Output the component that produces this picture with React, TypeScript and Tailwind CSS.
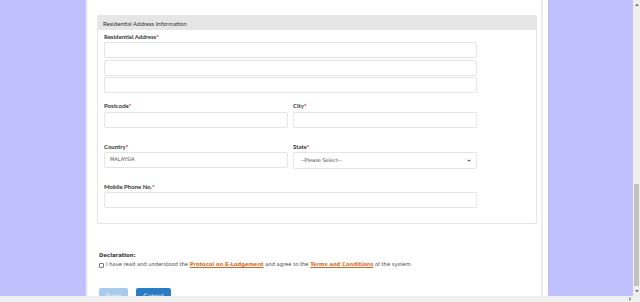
import React from 'react';

const lato = { fontFamily: 'Lato, "Open Sans", sans-serif' };
const tahoma = { fontFamily: '"DejaVu Sans", Verdana, sans-serif' };

function Label({ text }: { text: string }) {
  return (
    <div className="h-[8px] leading-[8px] text-[6px] font-bold text-[#333]" style={lato}>
      {text}
      <span className="text-[#cc0000]">*</span>
    </div>
  );
}

function Input({ value }: { value?: string }) {
  return (
    <div
      className="h-[16px] border border-[#e4e4e4] rounded-[2px] bg-white flex items-center px-[5px] text-[5px] text-[#555]"
      style={tahoma}
    >
      {value}
    </div>
  );
}

function Select() {
  return (
    <div
      className="h-[17px] border border-[#e4e4e4] rounded-[2px] bg-white flex items-center justify-between pl-[7px] pr-[5px] text-[5px] text-[#444]"
      style={tahoma}
    >
      <span>--Please Select--</span>
      <svg width="4" height="3" viewBox="0 0 10 8">
        <path d="M1 2 L5 6 L9 2" stroke="#222" strokeWidth="2.5" fill="none" />
      </svg>
    </div>
  );
}

export default function App() {
  return (
    <div className="w-[640px] h-[302px] overflow-hidden flex flex-col bg-white">
      <div className="flex flex-1 min-h-0">
        <div className="w-[86px] bg-[#c0c0ff]" />
        <div className="w-[462px] flex border-l-2 border-[#efefef] bg-white">
          <div className="w-[453px] pt-[15px]">
            {/* address box */}
            <div className="ml-[9px] w-[440px] border border-[#e6e6e6] rounded-[2px]">
              <div className="h-[14px] bg-[#e6e6e6] flex items-center px-[5px] text-[6px] text-[#333]" style={lato}>
                Residential Address Information
              </div>
              <div className="pl-[6px] pt-[3px] pb-[15px]">
                <div className="w-[373px]">
                  <div className="mb-[1px]">
                    <Label text="Residential Address" />
                  </div>
                  <div className="flex flex-col gap-[1.5px]">
                    <Input />
                    <Input />
                    <Input />
                  </div>

                  <div className="grid grid-cols-2 gap-x-[5px] mt-[9px]">
                    <div>
                      <div className="mb-[2px]"><Label text="Postcode" /></div>
                      <Input />
                    </div>
                    <div>
                      <div className="mb-[2px]"><Label text="City" /></div>
                      <Input />
                    </div>
                  </div>

                  <div className="grid grid-cols-2 gap-x-[5px] mt-[15px]">
                    <div>
                      <div className="mb-[1px]"><Label text="Country" /></div>
                      <Input value="MALAYSIA" />
                    </div>
                    <div>
                      <div className="mb-[1px]"><Label text="State" /></div>
                      <Select />
                    </div>
                  </div>

                  <div className="mt-[14px]">
                    <div className="mb-[1px]"><Label text="Mobile Phone No." /></div>
                    <Input />
                  </div>
                </div>
              </div>
            </div>

            {/* declaration */}
            <div className="ml-[11px] mt-[27px] text-[#444]" style={tahoma}>
              <div className="h-[8px] leading-[8px] text-[5.3px] font-bold text-[#333]">Declaration:</div>
              <div className="mt-[2px] h-[8px] flex items-center text-[5.2px]">
                <span className="w-[5px] h-[5px] border border-[#777] rounded-[1px] mr-[2px] bg-white" />
                <span>
                  I have read and understood the{' '}
                  <span className="font-bold underline text-[#d2691e]">Protocol on E-Lodgement</span> and agree to the{' '}
                  <span className="font-bold underline text-[#d2691e]">Terms and Conditions</span> of the system.
                </span>
              </div>
              <div className="mt-[19px] flex gap-[8px]">
                <button className="w-[29px] h-[14px] rounded-[2px] bg-[#a9cbeb] text-white text-[6px]" style={tahoma}>Save</button>
                <button className="w-[35px] h-[14px] rounded-[2px] bg-[#2b7dc3] text-white text-[6px]" style={tahoma}>Cancel</button>
              </div>
            </div>
          </div>
          <div className="w-[2px] bg-[#ececec]" />
          <div className="flex-1" />
        </div>
        <div className="w-[85px] bg-[#c0c0ff]" />
        <div className="w-[7px] bg-[#f0f0f0] flex flex-col items-center">
          <div className="h-[8px] flex items-center justify-center">
            <svg width="4" height="3" viewBox="0 0 8 6"><path d="M0 6 L4 1 L8 6Z" fill="#777" /></svg>
          </div>
          <div className="mt-[176px] w-[5px] h-[102px] bg-[#c1c1c1]" />
          <div className="flex-1 flex items-center justify-center">
            <svg width="4" height="3" viewBox="0 0 8 6"><path d="M0 0 L4 5 L8 0Z" fill="#777" /></svg>
          </div>
        </div>
      </div>
      <div className="h-[6px] bg-[#f0f0f0] flex justify-end pr-[8px] items-center">
        <svg width="3" height="4" viewBox="0 0 6 8"><path d="M0 0 L5 4 L0 8Z" fill="#999" /></svg>
      </div>
    </div>
  );
}
